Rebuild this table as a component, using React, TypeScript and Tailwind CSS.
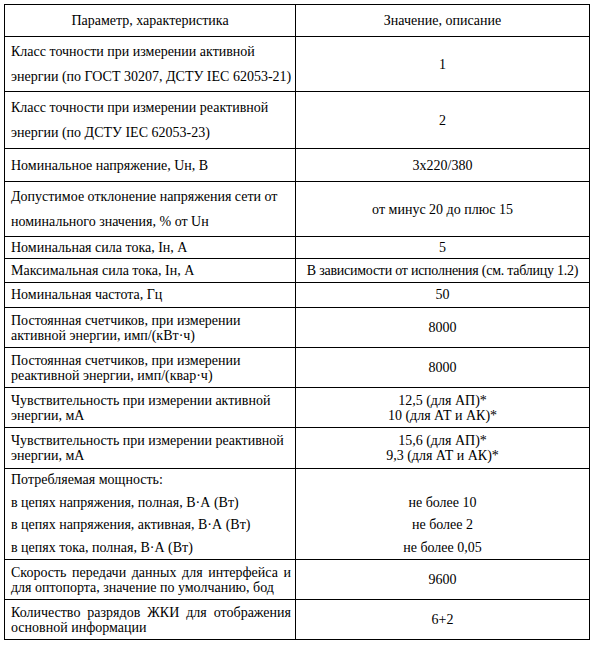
import type { ReactNode } from "react";

type Row = {
  left: ReactNode;
  right: ReactNode;
  h: string;
  lh: string;
  justify?: boolean;
  tight?: boolean;
};

const rows: Row[] = [
  {
    left: (
      <>
        Класс точности при измерении активной
        <br />
        энергии (по ГОСТ 30207, ДСТУ IEC 62053-21)
      </>
    ),
    right: "1",
    h: "h-[55px]",
    lh: "leading-[25px]",
  },
  {
    left: (
      <>
        Класс точности при измерении реактивной
        <br />
        энергии (по ДСТУ IEC 62053-23)
      </>
    ),
    right: "2",
    h: "h-[57px]",
    lh: "leading-[25px]",
  },
  {
    left: "Номинальное напряжение, Uн, В",
    right: "3х220/380",
    h: "h-[33px]",
    lh: "leading-[25px]",
  },
  {
    left: (
      <>
        Допустимое отклонение напряжения сети от
        <br />
        номинального значения, % от Uн
      </>
    ),
    right: "от минус 20 до плюс 15",
    h: "h-[55px]",
    lh: "leading-[25px]",
  },
  {
    left: "Номинальная сила тока, Iн, А",
    right: "5",
    h: "h-[22px]",
    lh: "leading-[18px]",
  },
  {
    left: "Максимальная сила тока, Iн, А",
    right: "В зависимости от исполнения (см. таблицу 1.2)",
    h: "h-[24px]",
    lh: "leading-[18px]",
    tight: true,
  },
  {
    left: "Номинальная частота, Гц",
    right: "50",
    h: "h-[25px]",
    lh: "leading-[18px]",
  },
  {
    left: (
      <>
        Постоянная счетчиков, при измерении
        <br />
        активной энергии, имп/(кВт·ч)
      </>
    ),
    right: "8000",
    h: "h-[40px]",
    lh: "leading-[15px]",
  },
  {
    left: (
      <>
        Постоянная счетчиков, при измерении
        <br />
        реактивной энергии, имп/(квар·ч)
      </>
    ),
    right: "8000",
    h: "h-[40px]",
    lh: "leading-[15px]",
  },
  {
    left: (
      <>
        Чувствительность при измерении активной
        <br />
        энергии, мА
      </>
    ),
    right: (
      <>
        12,5 (для АП)*
        <br />
        10 (для АТ и АК)*
      </>
    ),
    h: "h-[40px]",
    lh: "leading-[15px]",
  },
  {
    left: (
      <>
        Чувствительность при измерении реактивной
        <br />
        энергии, мА
      </>
    ),
    right: (
      <>
        15,6 (для АП)*
        <br />
        9,3 (для АТ и АК)*
      </>
    ),
    h: "h-[41px]",
    lh: "leading-[15px]",
  },
  {
    left: (
      <>
        Потребляемая мощность:
        <br />
        в цепях напряжения, полная, В·А (Вт)
        <br />
        в цепях напряжения, активная, В·А (Вт)
        <br />
        в цепях тока, полная, В·А (Вт)
      </>
    ),
    right: (
      <>
        &nbsp;
        <br />
        не более 10
        <br />
        не более 2
        <br />
        не более 0,05
      </>
    ),
    h: "h-[91px]",
    lh: "leading-[22.5px]",
  },
  {
    left: "Скорость передачи данных для интерфейса и для оптопорта, значение по умолчанию, бод",
    right: "9600",
    h: "h-[40px]",
    lh: "leading-[15px]",
    justify: true,
  },
  {
    left: "Количество разрядов ЖКИ для отображения основной информации",
    right: "6+2",
    h: "h-[40px]",
    lh: "leading-[15px]",
    justify: true,
  },
];

export default function App() {
  return (
    <div className="bg-white w-[594px] h-[646px] pt-[4px] pl-[4px] font-['Liberation_Serif','Times_New_Roman',serif] text-[14px] text-black">
      <table className="w-[585px] border-collapse table-fixed font-['Liberation_Serif','Times_New_Roman',serif] text-[14px]">
        <colgroup>
          <col className="w-[291px]" />
          <col className="w-[294px]" />
        </colgroup>
        <thead>
          <tr className="h-[32px]">
            <th className="border border-black font-normal text-center align-middle leading-[18px]">
              Параметр, характеристика
            </th>
            <th className="border border-black font-normal text-center align-middle leading-[18px]">
              Значение, описание
            </th>
          </tr>
        </thead>
        <tbody>
          {rows.map((r, i) => (
            <tr key={i} className={r.h}>
              <td
                className={`border border-black pl-[6px] pr-[4px] align-middle ${r.lh} ${
                  r.justify
                    ? "text-justify [text-align-last:left]"
                    : "text-left whitespace-nowrap"
                }`}
              >
                {r.left}
              </td>
              <td
                className={`border border-black px-[2px] text-center align-middle whitespace-nowrap ${r.lh} ${
                  r.tight ? "tracking-[-0.25px]" : ""
                }`}
              >
                {r.right}
              </td>
            </tr>
          ))}
        </tbody>
      </table>
    </div>
  );
}
